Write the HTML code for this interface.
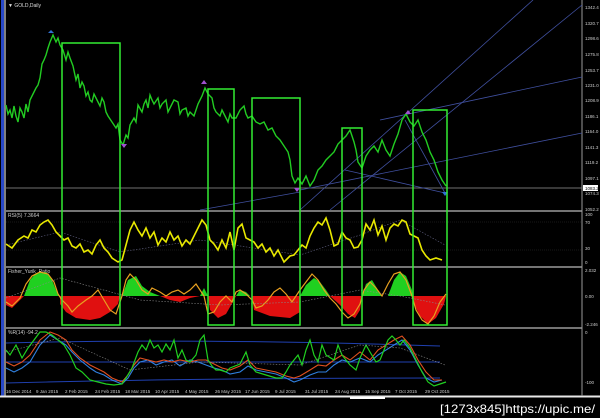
<!DOCTYPE html>
<html><head><meta charset="utf-8"><style>
html,body{margin:0;padding:0;background:#000;width:600px;height:418px;overflow:hidden}
svg{display:block}
text{font-family:"Liberation Sans",sans-serif}
</style></head><body>
<svg width="600" height="418" viewBox="0 0 600 418" xmlns="http://www.w3.org/2000/svg">
<rect width="600" height="418" fill="#000"/>
<rect x="1" y="0" width="3" height="396" fill="#2848c8"/>
<rect x="4" y="0" width="2" height="396" fill="#808080"/>
<g stroke="#9a9a9a" stroke-width="1.5">
<line x1="6" y1="211" x2="582" y2="211"/>
<line x1="6" y1="267" x2="582" y2="267"/>
<line x1="6" y1="328" x2="582" y2="328"/>
</g>
<line x1="0" y1="396.5" x2="600" y2="396.5" stroke="#e8e8e8" stroke-width="2"/>
<line x1="582" y1="0" x2="582" y2="396" stroke="#9a9a9a"/>
<line x1="6" y1="188" x2="582" y2="188" stroke="#707070"/>
<text x="8" y="7" font-size="5" fill="#ddd">▼ GOLD,Daily</text>
<g stroke="#4050a0" stroke-width="0.8" fill="none">
<line x1="300" y1="210" x2="533" y2="0"/>
<line x1="330" y1="210" x2="582" y2="5"/>
<line x1="380" y1="120" x2="582" y2="77"/>
<line x1="300" y1="190" x2="582" y2="133"/>
<line x1="200" y1="210" x2="300" y2="192"/>
<line x1="405" y1="120" x2="445" y2="193"/>
<line x1="345" y1="170" x2="445" y2="193"/>
</g>
<polyline fill="none" stroke="#22cc22" stroke-width="1.4" points="6,105 8,114 10,110 12,118 14,106 16,116 18,122 20,108 22,112 24,118 26,104 28,112 30,100 32,96 34,92 36,88 38,85 40,78 42,64 44,60 46,55 48,48 50,42 53,35 56,42 58,38 60,45 63,50 66,60 68,52 70,58 73,66 76,80 78,74 80,88 82,82 84,86 86,96 88,92 90,100 92,102 94,94 96,98 100,106 102,98 104,102 106,112 108,116 112,122 116,128 118,124 120,140 123,145 126,135 128,138 130,125 134,118 136,122 138,105 142,112 144,104 146,100 148,108 150,95 152,100 154,104 158,98 160,108 162,104 166,100 168,112 170,108 172,104 174,100 178,102 180,114 182,110 186,108 188,116 190,112 194,116 198,104 202,96 205,88 208,94 212,98 214,108 216,112 220,116 222,110 224,114 228,122 230,114 232,118 236,118 240,110 244,106 246,114 248,118 252,116 256,122 260,124 264,122 268,130 272,128 276,136 280,140 284,146 288,152 290,160 292,176 295,183 298,178 302,184 306,176 310,186 314,180 318,170 322,166 326,160 330,156 334,152 336,148 338,144 342,140 346,136 350,130 354,142 356,150 358,162 362,168 366,156 370,150 374,146 378,152 382,140 386,150 390,156 394,144 398,134 402,120 406,114 410,122 414,126 418,120 422,132 426,140 430,152 434,160 438,172 442,180 446,186"/>
<polygon points="51,30 54,33 48,33" fill="#3070d0"/>
<polygon points="204,80 207,84 201,84" fill="#a050d0"/>
<polygon points="124,148 127,144 121,144" fill="#a050d0"/>
<polygon points="297,192 300,188 294,188" fill="#a050d0"/>
<polygon points="408,110 411,114 405,114" fill="#a050d0"/>
<polygon points="445,196 448,192 442,192" fill="#3070d0"/>
<line x1="6" y1="222" x2="582" y2="222" stroke="#333" stroke-width="0.6" stroke-dasharray="1,1"/>
<line x1="6" y1="250" x2="582" y2="250" stroke="#333" stroke-width="0.6" stroke-dasharray="1,1"/>
<text x="8" y="217" font-size="5" fill="#ccc">RSI(5) 7.3664</text>
<polyline fill="none" stroke="#606080" stroke-width="0.6" stroke-dasharray="1.5,1.5" points="6,245 60,232 120,252 200,240 300,255 360,235 400,220 445,245"/>
<polyline fill="none" stroke="#e8e800" stroke-width="1.6" points="6,244 12,248 18,240 24,236 28,238 32,230 36,232 40,225 44,222 48,220 52,225 56,232 60,236 64,240 68,238 72,246 76,248 80,244 84,252 88,250 92,254 96,245 100,240 104,248 108,252 112,258 118,262 122,260 126,245 130,230 134,222 138,230 142,236 146,228 150,238 154,232 158,245 162,238 166,242 170,232 174,240 178,236 182,246 186,240 190,244 194,236 198,228 202,220 206,225 210,240 214,244 218,250 222,240 226,248 230,232 234,250 238,228 242,224 246,238 250,240 254,242 258,248 262,244 266,252 270,248 274,256 278,250 284,262 290,256 294,255 298,250 302,245 306,248 310,236 314,228 318,222 322,225 326,218 330,230 334,246 338,244 342,232 346,238 350,240 354,248 358,247 362,240 366,224 370,230 374,220 378,235 382,226 386,240 390,228 394,224 398,226 402,220 406,222 410,234 414,236 418,238 422,250 426,256 430,260 436,258 442,260"/>
<g font-size="4.5" fill="#ccc"><text x="585" y="216">100</text><text x="585" y="224">70</text><text x="585" y="250">30</text><text x="585" y="264">0</text></g>
<text x="8" y="273" font-size="5" fill="#ccc">Fisher_Yurik_Ratio</text>
<path fill="#e01010" d="M6,296 L6,305 L12,308 L20,300 L24,296 Z M60,296 L60,304 L66,312 L76,318 L90,320 L100,318 L110,312 L118,304 L120,296 Z M160,296 L170,300 L180,302 L190,298 L200,296 Z M208,296 L210,310 L218,318 L226,314 L234,300 L236,296 Z M252,296 L254,310 L270,316 L290,318 L300,312 L300,296 Z M330,296 L340,305 L348,314 L355,318 L360,310 L362,296 Z M413,296 L415,306 L420,316 L428,324 L436,318 L444,304 L446,296 Z"/>
<path fill="#20d020" d="M24,296 L30,280 L36,273 L46,272 L52,280 L56,290 L60,296 Z M122,296 L128,280 L136,276 L142,286 L150,292 L160,296 Z M200,296 L204,288 L208,296 Z M236,296 L240,290 L246,292 L250,296 Z M300,296 L306,285 L314,278 L320,282 L326,290 L330,296 Z M362,296 L366,284 L372,280 L378,290 L382,296 Z M388,296 L394,280 L400,272 L406,276 L412,290 L413,296 Z"/>
<polyline fill="none" stroke="#e8a020" stroke-width="1.2" points="6,302 12,306 20,298 26,284 32,276 40,272 48,274 54,282 58,294 62,300 68,306 72,312 78,306 86,300 92,296 98,290 104,300 110,310 116,314 122,296 126,280 130,274 136,280 142,290 148,294 152,288 160,292 166,296 172,292 178,290 184,294 190,290 196,284 200,290 204,296 208,314 214,312 220,302 226,296 232,302 236,292 240,290 246,294 252,300 256,308 262,306 268,300 274,292 280,288 286,294 292,302 296,296 300,290 306,282 312,274 318,280 324,290 330,298 336,304 342,312 348,318 354,314 360,304 364,290 370,282 376,288 382,296 388,284 394,274 400,272 406,280 412,296 416,310 422,320 428,324 434,316 440,302 446,294"/>
<polyline fill="none" stroke="#888" stroke-width="0.6" stroke-dasharray="1.5,1.5" points="6,298 60,278 140,300 220,305 300,302 360,290 400,296 445,305"/>
<g font-size="4.5" fill="#ccc"><text x="585" y="272">2.032</text><text x="585" y="298">0.00</text><text x="585" y="326">-2.246</text></g>
<text x="8" y="334" font-size="5" fill="#ccc">%R(14) -94.2</text>
<g fill="none" stroke="#2040b0" stroke-width="1">
<path d="M6,343 Q200,338 440,346"/>
<path d="M6,362 L440,362"/>
<path d="M6,383 Q200,378 440,378"/>
</g>
<polyline fill="none" stroke="#3080e0" stroke-width="1.1" points="6,368 14,372 22,368 30,362 40,345 50,335 58,340 66,345 72,352 80,360 90,368 96,372 104,375 112,380 122,384 128,378 134,368 140,362 148,360 156,365 164,362 172,360 180,366 190,360 198,362 206,365 214,368 222,370 230,374 240,372 248,366 256,370 266,372 276,374 286,378 294,382 300,380 310,375 318,372 326,372 334,365 342,360 350,362 360,358 370,362 378,355 386,350 394,345 402,340 410,350 418,365 426,378 434,382 442,380"/>
<polyline fill="none" stroke="#e05020" stroke-width="1.1" points="6,362 14,366 22,362 30,355 40,340 50,332 58,335 66,340 72,350 80,358 90,365 96,368 104,372 112,378 122,382 128,375 134,365 140,358 148,360 156,362 164,360 172,362 180,360 190,362 198,360 206,360 214,364 222,368 230,370 240,366 248,360 256,368 266,370 276,372 286,376 294,378 300,376 310,370 318,365 326,366 334,360 342,355 350,360 360,352 370,360 378,350 386,345 394,340 402,336 410,345 418,360 426,372 434,380 442,380"/>
<polyline fill="none" stroke="#20d020" stroke-width="1.2" points="6,350 10,355 16,345 22,358 28,348 34,340 40,332 46,332 52,335 58,340 64,345 70,355 76,368 82,372 90,380 98,382 106,384 114,385 122,384 126,378 132,368 138,352 142,345 146,350 150,340 154,348 158,345 162,352 166,344 170,350 174,340 178,358 182,350 186,360 190,362 196,355 200,340 204,335 208,360 212,366 216,370 220,370 226,372 230,368 240,364 246,352 250,365 256,372 266,375 276,378 282,378 286,372 290,365 294,360 298,355 302,365 306,350 310,340 314,355 318,362 322,345 326,355 334,360 338,345 342,355 350,365 356,370 360,358 366,345 370,352 376,362 380,360 384,350 388,340 392,336 396,340 400,345 404,340 410,348 416,360 422,372 428,382 434,386 440,384 446,382"/>
<polyline fill="none" stroke="#888" stroke-width="0.6" stroke-dasharray="1.5,1.5" points="6,352 60,338 130,370 200,362 300,365 360,345 400,348 445,365"/>
<g font-size="4.5" fill="#ccc"><text x="585" y="334">0</text><text x="585" y="384">-100</text></g>
<g fill="none" stroke="#33ee33" stroke-width="1.5">
<rect x="62" y="43" width="58" height="282"/>
<rect x="208" y="89" width="26" height="236"/>
<rect x="252" y="98" width="48" height="227"/>
<rect x="342" y="128" width="20" height="197"/>
<rect x="413" y="110" width="34" height="215"/>
</g>
<g font-size="4.5" fill="#ccc">
<text x="585" y="9">1342.4</text><text x="585" y="25">1320.7</text><text x="585" y="40">1298.6</text><text x="585" y="56">1275.8</text><text x="585" y="72">1253.7</text><text x="585" y="87">1231.0</text><text x="585" y="102">1208.9</text><text x="585" y="118">1186.1</text><text x="585" y="133">1164.0</text><text x="585" y="149">1141.3</text><text x="585" y="164">1119.2</text><text x="585" y="180">1097.1</text><text x="585" y="195">1074.3</text><text x="585" y="211">1052.2</text>
</g>
<rect x="583" y="185" width="15" height="6" fill="#fff"/>
<text x="585" y="190" font-size="4.5" fill="#000">1083.2</text>
<g font-size="4.5" fill="#ccc">
<text x="6" y="393">16 Dec 2014</text><text x="36" y="393">9 Jan 2015</text><text x="65" y="393">2 Feb 2015</text><text x="95" y="393">24 Feb 2015</text><text x="125" y="393">18 Mar 2015</text><text x="155" y="393">10 Apr 2015</text><text x="185" y="393">4 May 2015</text><text x="215" y="393">26 May 2015</text><text x="245" y="393">17 Jun 2015</text><text x="275" y="393">9 Jul 2015</text><text x="305" y="393">31 Jul 2015</text><text x="335" y="393">24 Aug 2015</text><text x="365" y="393">15 Sep 2015</text><text x="395" y="393">7 Oct 2015</text><text x="425" y="393">29 Oct 2015</text>
</g>
<rect x="350" y="397" width="35" height="2" fill="#fff"/>
<text x="440" y="413" font-size="12" fill="#fff" font-family="Liberation Mono,monospace" textLength="155" lengthAdjust="spacingAndGlyphs">[1273x845]https://upic.me/</text>
</svg>
</body></html>
